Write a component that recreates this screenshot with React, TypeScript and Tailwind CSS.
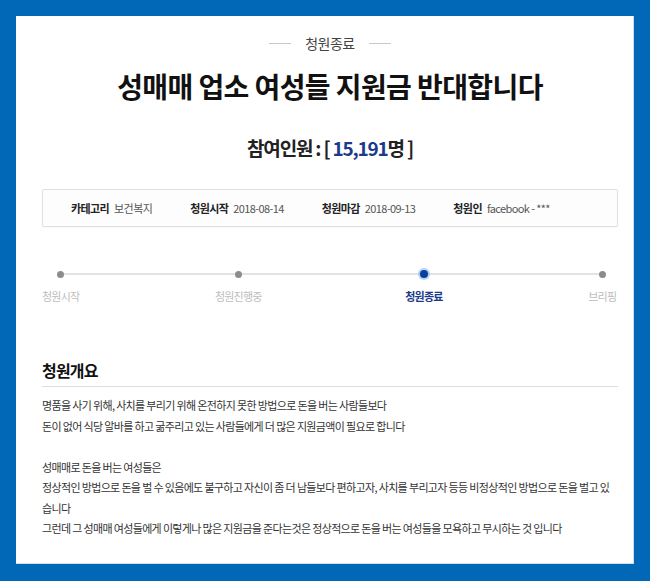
import React from 'react';

const FONT = { fontFamily: '"Noto Sans CJK KR", "Noto Sans", sans-serif' };

const info = [
  { label: '카테고리', value: '보건복지' },
  { label: '청원시작', value: '2018-08-14' },
  { label: '청원마감', value: '2018-09-13' },
  { label: '청원인', value: 'facebook - ***' },
];

// margins between step centres follow the screenshot (not perfectly even)
const steps = [
  { name: '청원시작', active: false, gap: '' },
  { name: '청원진행중', active: false, gap: 'ml-[140px]' },
  { name: '청원종료', active: true, gap: 'ml-[148px]' },
  { name: '브리핑', active: false, gap: 'ml-[144px]' },
];

const body = [
  '명품을 사기 위해, 사치를 부리기 위해 온전하지 못한 방법으로 돈을 버는 사람들보다',
  '돈이 없어 식당 알바를 하고 굶주리고 있는 사람들에게 더 많은 지원금액이 필요로 합니다',
  '',
  '성매매로 돈을 버는 여성들은',
  '정상적인 방법으로 돈을 벌 수 있음에도 불구하고 자신이 좀 더 남들보다 편하고자, 사치를 부리고자 등등 비정상적인 방법으로 돈을 벌고 있',
  '습니다',
  '그런데 그 성매매 여성들에게 이렇게나 많은 지원금을 준다는것은 정상적으로 돈을 버는 여성들을 모욕하고 무시하는 것 입니다',
];

export default function App() {
  return (
    <div className="w-[650px] h-[581px] bg-[#0068b7] pt-[16px] pl-[16px]" style={FONT}>
      <div className="w-[618px] h-[548px] bg-white border-b border-r border-[#d6dde6] pl-[26px] pr-[15px] pt-[17px]">
        {/* status */}
        <div className="flex items-center justify-center gap-[14px]">
          <span className="w-[22px] h-px bg-[#c8c8c8]" />
          <span className="text-[14px] leading-[20px] text-[#444] tracking-[-0.5px]">청원종료</span>
          <span className="w-[22px] h-px bg-[#c8c8c8]" />
        </div>

        <h1 className="mt-[15px] text-center text-[28px] leading-[36px] font-bold text-[#111] tracking-[-0.6px]">
          성매매 업소 여성들 지원금 반대합니다
        </h1>

        <div className="mt-[31px] text-center text-[19px] leading-[26px] font-bold text-[#222] tracking-[-1.2px]">
          참여인원 : [ <span className="text-[#1b3a8c]">15,191</span>명 ]
        </div>

        {/* info box */}
        <div className="mt-[28px] h-[38px] border border-[#e0e0e0] rounded-[2px] bg-[#fdfdfd] shadow-[0_1px_2px_rgba(0,0,0,0.04)] flex items-center pl-[28px] gap-[38px] text-[11px] tracking-[-0.6px]">
          {info.map((i) => (
            <div key={i.label} className="flex items-center gap-[5px]">
              <span className="font-bold text-[#222]">{i.label}</span>
              <span className="text-[#555]">{i.value}</span>
            </div>
          ))}
        </div>

        {/* progress */}
        <div className="relative mt-[42px]">
          <div className="absolute left-[19px] right-[15px] top-[4px] h-[2px] bg-[#e2e2e2]" />
          <div className="relative flex">
            {steps.map((s) => (
              <div key={s.name} className={`${s.gap} w-[38px] flex flex-col items-center`}>
                <div className="h-[10px] flex items-center justify-center">
                  {s.active ? (
                    <span className="w-[8px] h-[8px] rounded-full bg-[#0b3f9e] shadow-[0_0_0_2px_rgba(90,160,240,0.45)]" />
                  ) : (
                    <span className="w-[7px] h-[7px] rounded-full bg-[#8c8c8c]" />
                  )}
                </div>
                <span
                  className={
                    s.active
                      ? 'mt-[9px] whitespace-nowrap text-[11px] leading-[16px] font-bold text-[#1b3a8c] tracking-[-0.8px]'
                      : 'mt-[9px] whitespace-nowrap text-[11px] leading-[16px] text-[#bdbdbd] tracking-[-0.8px]'
                  }
                >
                  {s.name}
                </span>
              </div>
            ))}
          </div>
        </div>

        {/* overview */}
        <h2 className="mt-[54px] pb-[4px] border-b border-[#dedede] text-[16px] leading-[24px] font-bold text-[#111] tracking-[-0.8px]">
          청원개요
        </h2>
        <div className="mt-[8px] text-[11px] leading-[20.5px] text-[#333] tracking-[-0.65px]">
          {body.map((line, idx) => (
            <div key={idx} className="whitespace-nowrap h-[20.5px]">
              {line}
            </div>
          ))}
        </div>
      </div>
    </div>
  );
}
